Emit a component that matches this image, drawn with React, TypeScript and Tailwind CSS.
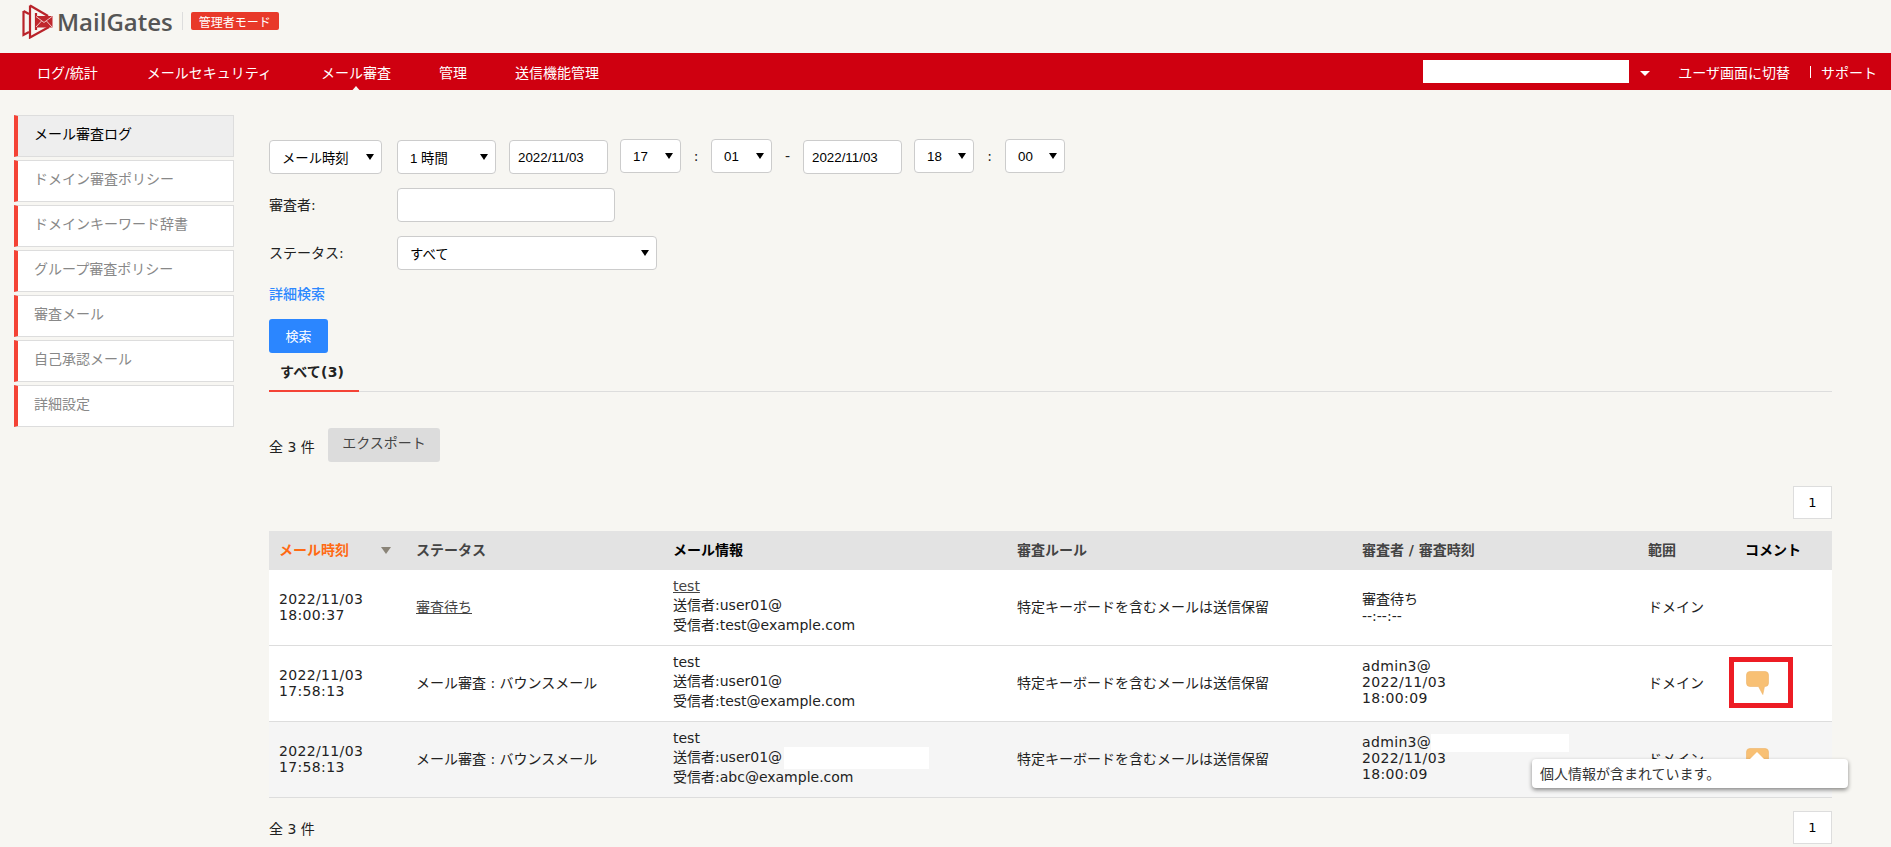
import React from "react";

const FONT = '"DejaVu Sans","Noto Sans CJK JP",sans-serif';
const FORMFONT = '"Liberation Sans","Noto Sans CJK JP",sans-serif';

function Caret() {
  return <span className="absolute right-[7px] top-1/2 -translate-y-1/2 w-0 h-0 border-l-[4.5px] border-r-[4.5px] border-t-[6px] border-l-transparent border-r-transparent border-t-black" />;
}

function Select({ className, label }: { className: string; label: string }) {
  return (
    <div className={"relative flex items-center pl-[12px] bg-white border border-[#ccc] rounded-[4px] h-[34px] text-[13.33px] text-black shrink-0 " + className} style={{ fontFamily: FORMFONT }}>
      {label}
      <Caret />
    </div>
  );
}

function DateInput({ className }: { className: string }) {
  return (
    <div className={"flex items-center pl-[8px] bg-white border border-[#ccc] rounded-[4px] h-[34px] text-[13.33px] text-black shrink-0 " + className} style={{ fontFamily: FORMFONT }}>
      2022/11/03
    </div>
  );
}

function Logo() {
  return (
    <svg width="31" height="35" viewBox="0 0 31 35" className="shrink-0">
      <g fill="none" stroke="#b9232a" strokeWidth="2.2">
        <path d="M1.5 7 V31 L7 28" />
        <path d="M1.5 7 L7 10" />
        <path d="M8 1.5 V33.5 L27 23" />
        <path d="M8 1.5 L26 12" />
        <path d="M14 9 V26" />
      </g>
      <rect x="13.5" y="12" width="17" height="11.5" fill="#c0272d" />
      <path d="M14 12.5 L22 18.5 L30 12.5 M14 23 L19.5 17 M30 23 L24.5 17" fill="none" stroke="#f3d9d6" strokeWidth="0.9" />
    </svg>
  );
}

function Bubble() {
  return (
    <svg width="23" height="24" viewBox="0 0 23 24" className="block">
      <path d="M4 0.5 H19 Q22.5 0.5 22.5 4 V12 Q22.5 15.5 19 15.5 H18.5 L16.8 23.5 L12.5 15.5 H4 Q0.5 15.5 0.5 12 V4 Q0.5 0.5 4 0.5 Z" fill="#f8c074" stroke="#eeb468" strokeWidth="0.6" />
    </svg>
  );
}

const navItems = ["ログ/統計", "メールセキュリティ", "メール審査", "管理", "送信機能管理"];
const sideItems = ["メール審査ログ", "ドメイン審査ポリシー", "ドメインキーワード辞書", "グループ審査ポリシー", "審査メール", "自己承認メール", "詳細設定"];

function Pager() {
  return <div className="w-[39px] h-[33px] flex items-center justify-center bg-white border border-[#ddd] text-[13px] text-black">1</div>;
}

const td = "px-[10px] pb-[3px] align-middle border-b border-[#ddd]";
const tdTime = "px-[10px] pb-[2px] align-middle border-b border-[#ddd] tracking-[0.35px]";
const tdWho = "px-[10px] pb-[3px] align-middle border-b border-[#ddd] tracking-[0.35px]";
const tdIcon = "px-[10px] pb-[2px] align-middle border-b border-[#ddd]";
const th = "px-[10px] pb-[4px] text-left font-bold align-middle";

export default function App() {
  return (
    <div className="w-full h-[847px] overflow-hidden bg-[#f7f6f2] text-[14px] leading-[normal] text-[#222]" style={{ fontFamily: FONT }}>
      <header className="h-[53px] flex items-start pl-[22px] pt-[4px]">
        <Logo />
        <span className="ml-[4px] mt-[3px] text-[24px] font-semibold text-[#555] leading-[30px]" style={{ fontFamily: '"Open Sans",sans-serif' }}>MailGates</span>
        <span className="ml-[9px] mt-[8px] w-px h-[18px] bg-[#ddd]" />
        <span className="ml-[8px] mt-[8px] w-[88px] h-[18px] flex items-center justify-center rounded-[2px] bg-[#e8392a] text-white text-[12px]">管理者モード</span>
      </header>

      <nav className="relative h-[37px] bg-[#cf0010] text-white flex items-center pl-[37px] pr-[14px]">
        <div className="flex items-center gap-[49px]">
          {navItems.map((n, i) => (
            <span key={n} className={"relative " + (i >= 2 ? "-mr-[1px]" : "")}>
              {n}
              {i === 2 && <span className="absolute left-1/2 -translate-x-1/2 top-[24px] w-0 h-0 border-l-[6px] border-r-[6px] border-b-[7px] border-l-transparent border-r-transparent border-b-[#f7f6f2]" />}
            </span>
          ))}
        </div>
        <div className="ml-auto flex items-center">
          <div className="w-[206px] h-[23px] bg-white" />
          <span className="ml-[11px] mt-[4px] w-0 h-0 border-l-[5px] border-r-[5px] border-t-[5px] border-l-transparent border-r-transparent border-t-white" />
          <span className="ml-[28px]">ユーザ画面に切替</span>
          <span className="ml-[20px] w-px h-[12px] bg-white" />
          <span className="ml-[10px]">サポート</span>
        </div>
      </nav>

      <div className="flex items-start">
        <aside className="ml-[14px] mt-[25px] w-[220px] flex flex-col gap-[3px] shrink-0">
          {sideItems.map((s, i) => (
            <div key={s} className={"h-[42px] pl-[16px] pt-[7px] border border-l-[4px] border-[#ddd] border-l-[#f44336] " + (i === 0 ? "bg-[#eeeeee] text-black" : "bg-white text-[#888]")}>
              {s}
            </div>
          ))}
        </aside>

        <main className="ml-[35px] w-[1563px] shrink-0 pt-[49px]">
          <div className="flex items-start h-[34px]">
            <Select className="w-[113px] mt-px" label="メール時刻" />
            <Select className="w-[99px] ml-[15px] mt-px" label="1 時間" />
            <DateInput className="w-[99px] ml-[13px] mt-px" />
            <Select className="w-[61px] ml-[12px]" label="17" />
            <span className="w-[30px] text-center mt-[9px]">:</span>
            <Select className="w-[61px]" label="01" />
            <span className="w-[31px] text-center mt-[9px]">-</span>
            <DateInput className="w-[99px] mt-px" />
            <Select className="w-[60px] ml-[12px]" label="18" />
            <span className="w-[31px] text-center mt-[9px]">:</span>
            <Select className="w-[60px]" label="00" />
          </div>

          <div className="flex items-center mt-[15px] h-[34px]">
            <span className="w-[128px] pb-[2px]">審査者:</span>
            <div className="w-[218px] h-[34px] bg-white border border-[#ccc] rounded-[4px]" />
          </div>
          <div className="flex items-center mt-[14px] h-[34px]">
            <span className="w-[128px] pb-[3px]">ステータス:</span>
            <Select className="w-[260px]" label="すべて" />
          </div>
          <div className="mt-[14px] h-[21px] flex items-center pb-[4px] text-[#2d88ff] font-medium">詳細検索</div>
          <button className="block mt-[14px] w-[59px] h-[34px] pb-[2px] rounded-[3px] bg-[#2b86ff] text-white text-[13px]">検索</button>

          <div className="h-[39px] border-b border-[#ddd] flex">
            <div className="w-[90px] h-[39px] border-b-[2px] border-[#f44336] flex items-center pl-[11px] font-bold text-[#222] pb-[2px] tracking-[0.2px]">すべて(3)</div>
          </div>

          <div className="flex items-center mt-[36px]">
            <span className="w-[59px] pt-[2px]">全&nbsp;3&nbsp;件</span>
            <button className="w-[112px] h-[34px] rounded-[3px] bg-[#dcdcdc] text-[#444] pb-[6px]">エクスポート</button>
          </div>

          <div className="flex justify-end mt-[24px]"><Pager /></div>

          <table className="w-full mt-[12px] table-fixed border-separate border-spacing-0">
            <colgroup>
              <col className="w-[137px]" />
              <col className="w-[257px]" />
              <col className="w-[344px]" />
              <col className="w-[345px]" />
              <col className="w-[286px]" />
              <col className="w-[97px]" />
              <col className="w-[97px]" />
            </colgroup>
            <thead>
              <tr className="h-[39px] bg-[#e3e3e3]">
                <th className={th + " text-[#ff6a13]"}>
                  <div className="flex items-center justify-between">
                    <span>メール時刻</span>
                    <span className="w-0 h-0 mr-[5px] mt-[3px] border-l-[5.5px] border-r-[5.5px] border-t-[7px] border-l-transparent border-r-transparent border-t-[#8a8478]" />
                  </div>
                </th>
                <th className={th + " text-[#444]"}>ステータス</th>
                <th className={th + " text-black"}>メール情報</th>
                <th className={th + " text-[#444]"}>審査ルール</th>
                <th className={th + " text-[#444]"}>審査者 / 審査時刻</th>
                <th className={th + " text-[#444]"}>範囲</th>
                <th className={th + " text-black"}>コメント</th>
              </tr>
            </thead>
            <tbody>
              <tr className="h-[76px] bg-white">
                <td className={tdTime}>2022/11/03<br />18:00:37</td>
                <td className={td}><span className="underline text-[#444]">審査待ち</span></td>
                <td className={td}><span className="underline text-[#444]">test</span><br />送信者:user01@<br />受信者:test@example.com</td>
                <td className={td}>特定キーボードを含むメールは送信保留</td>
                <td className={td}>審査待ち<br />--:--:--</td>
                <td className={td}>ドメイン</td>
                <td className={td}></td>
              </tr>
              <tr className="h-[76px] bg-white">
                <td className={tdTime}>2022/11/03<br />17:58:13</td>
                <td className={td}>メール審査 : バウンスメール</td>
                <td className={td}>test<br />送信者:user01@<br />受信者:test@example.com</td>
                <td className={td}>特定キーボードを含むメールは送信保留</td>
                <td className={tdWho}>admin3@<br />2022/11/03<br />18:00:09</td>
                <td className={td}>ドメイン</td>
                <td className={tdIcon}>
                  <div className="relative w-[23px] ml-px">
                    <Bubble />
                    <span className="absolute -left-[17px] -top-[14px] w-[64px] h-[51px] border-[5px] border-[#ed1c24]" />
                  </div>
                </td>
              </tr>
              <tr className="h-[76px] bg-[#f5f5f5]">
                <td className={tdTime}>2022/11/03<br />17:58:13</td>
                <td className={td}>メール審査 : バウンスメール</td>
                <td className={td}>test<br />送信者:user01@<span className="inline-block align-middle ml-[2px] w-[145px] h-[22px] -my-[4px] bg-white" /><br />受信者:abc@example.com</td>
                <td className={td}>特定キーボードを含むメールは送信保留</td>
                <td className={tdWho}>admin3@<span className="inline-block align-middle w-[138px] h-[18px] -my-[2px] bg-white" /><br />2022/11/03<br />18:00:09</td>
                <td className={td}>ドメイン</td>
                <td className="px-[10px] align-middle border-b border-[#ddd]">
                  <div className="relative w-[23px] ml-px">
                    <Bubble />
                    <div className="absolute -left-[214px] top-[11px] w-[316px] h-[29px] bg-white rounded-[4px] shadow-[0_2px_4px_rgba(0,0,0,0.45)] flex items-center pl-[8px] text-[#333]">
                      <span className="absolute left-[218px] -top-[7px] w-0 h-0 border-l-[7px] border-r-[7px] border-b-[7px] border-l-transparent border-r-transparent border-b-white" />
                      個人情報が含まれています。
                    </div>
                  </div>
                </td>
              </tr>
            </tbody>
          </table>

          <div className="flex items-start justify-between mt-[13px]">
            <span className="mt-[7px]">全&nbsp;3&nbsp;件</span>
            <Pager />
          </div>
        </main>
      </div>
    </div>
  );
}
